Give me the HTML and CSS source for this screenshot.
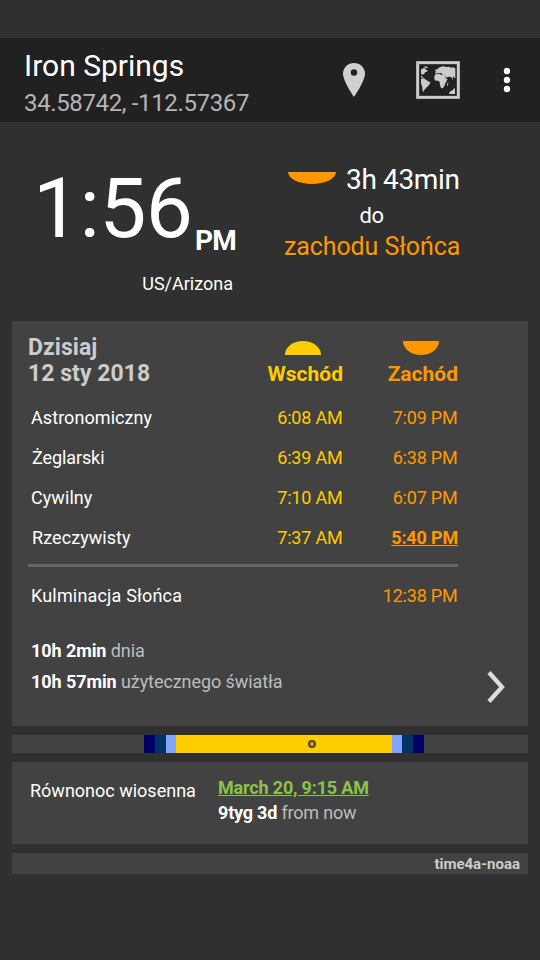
FILE: index.html
```html
<!DOCTYPE html>
<html lang="pl">
<head>
<meta charset="utf-8">
<title>Iron Springs</title>
<link rel="stylesheet" href="styles.css">
</head>
<body>
<header class="bar">
  <div class="place">
    <h1><span>Iron Springs</span></h1>
    <p><span>34.58742, -112.57367</span></p>
  </div>
  <svg class="pin" width="22" height="34" viewBox="0 0 22 34"><path fill="#d0d0d0" fill-rule="evenodd" d="M11 0C4.900 0 0 4.700 0 10.700C0 18 11 34 11 34S22 18 22 10.700C22 4.700 17.100 0 11 0ZM11 6.300a3.200 3.200 0 1 1 0 6.400a3.200 3.200 0 0 1 0-6.400Z"/></svg>
  <svg class="map" width="44" height="38" viewBox="0 0 132 114">
    <rect x="5" y="5" width="122" height="104" fill="none" stroke="#ccc" stroke-width="9"/>
    <g fill="#ccc">
      <path d="M15 25l5-1 2-4 5 2 3 4 5 2-2 4-6 2-2 5-5 2-2-3-3 3ZM24 16l9 1 4 3-5 2-7-3ZM15 43l4 4 3 2-1 3-6-4Z"/>
      <path d="M15 53l8-1 7 4 5 4 8 4-3 7-7 7-6 7-4 4v5l-3-3-1-8-1-8-3-7Z"/>
      <path d="M58 40l-1-5 5-2-5-3 2-6 3 3 4-5 7-4 11-2 5 2 10-1 6 3 6-1 7 3v30l-4-2-1-4-2 1-1 4 2 5-3-1-3-6-5-2-7 1-2 4-4-7-8-4-3-4-9-1-6 1-3 3Z"/>
      <path d="M55 45l6-6 9-1 4 3 8 0 5 3 3 9 5 1-5 9-3 6-2 7-5 6-5-1-3-9-1-9-4-4-8 0-4-5Z"/>
      <path d="M99 96l5-6 6-2 3-5 4-1v17l-11 0-7-1ZM95 64l2 1-1 9-3 0Z"/>
    </g>
  </svg>
  <svg class="dots" width="8" height="26" viewBox="0 0 8 26"><g fill="#fff"><circle cx="4" cy="4" r="3.200"/><circle cx="4" cy="13" r="3.200"/><circle cx="4" cy="22" r="3.200"/></g></svg>
</header>

<section class="now">
  <div class="clock">
    <div class="time"><span class="digits">1:56</span><span class="ampm">PM</span></div>
    <div class="zone"><span>US/Arizona</span></div>
  </div>
  <div class="next">
    <div class="remaining"><i class="sun-down wide"></i><span>3h 43min</span></div>
    <div class="until"><span>do</span></div>
    <div class="event"><span>zachodu Słońca</span></div>
  </div>
</section>

<main>
  <section class="card today">
    <div class="head">
      <h2><span class="day">Dzisiaj</span><br><span class="date">12 sty 2018</span></h2>
      <div class="col rise"><i class="sun-up"></i><b>Wschód</b></div>
      <div class="col set"><i class="sun-down"></i><b>Zachód</b></div>
    </div>
    <div class="row"><span class="n1">Astronomiczny</span><span class="rise">6:08 AM</span><span class="set">7:09 PM</span></div>
    <div class="row"><span class="n2 tight">Żeglarski</span><span class="rise">6:39 AM</span><span class="set">6:38 PM</span></div>
    <div class="row"><span class="n1">Cywilny</span><span class="rise">7:10 AM</span><span class="set">6:07 PM</span></div>
    <div class="row"><span class="n2">Rzeczywisty</span><span class="rise">7:37 AM</span><span class="set"><b class="link">5:40 PM</b></span></div>
    <div class="rule"></div>
    <div class="row"><span class="n1 wide-text">Kulminacja Słońca</span><span></span><span class="set">12:38 PM</span></div>
    <div class="lengths">
      <div><p><b>10h 2min</b> dnia</p><p><b>10h 57min</b> użytecznego światła</p></div>
      <svg class="chevron" width="18" height="32" viewBox="0 0 18 32"><path d="M2 1.500L15 16L2 30.500" fill="none" stroke="#ddd" stroke-width="4.300"/></svg>
    </div>
  </section>

  <div class="daylight">
    <i class="seg astro"></i><i class="seg naut"></i><i class="seg civil"></i><i class="seg day-seg"><i class="marker"></i></i><i class="seg civil"></i><i class="seg naut"></i><i class="seg astro"></i>
  </div>

  <section class="card season">
    <span class="name">Równonoc wiosenna</span>
    <div class="when"><p><b class="link">March 20, 9:15 AM</b></p><p class="ago"><b>9tyg 3d</b> from now</p></div>
  </section>

  <footer>time4a-noaa</footer>
</main>
</body>
</html>
```
FILE: styles.css
```css
* { box-sizing: border-box; margin: 0; padding: 0; }
body { width: 540px; height: 960px; padding-top: 38px; background: #303030; color: #fff; font-family: Roboto, "Liberation Sans", sans-serif; font-size: 18px; white-space: nowrap; overflow: hidden; }
i { display: block; }
svg { display: block; flex: none; }

.bar { display: flex; height: 84px; background: #212121; padding-left: 24px; }
.place { width: 319px; padding-top: 8px; }
.place h1 { font-size: 30px; font-weight: 400; line-height: 40px; }
.place p { margin-top: 2px; font-size: 24px; line-height: 30px; letter-spacing: -0.36px; color: #b5b5b5; }
.pin { margin-top: 25px; }
.map { margin: 23px 0 0 51px; }
.dots { margin: 29px 0 0 43px; }

.now { display: flex; height: 199px; }
.clock { width: 270px; padding: 42px 0 0 33px; }
.time { display: flex; height: 108px; }
.digits { width: 162px; font-size: 84px; line-height: 90px; letter-spacing: -0.7px; }
.ampm { padding-top: 61px; font-size: 28px; font-weight: 700; line-height: 32px; letter-spacing: -0.7px; }
.zone { width: 200px; text-align: right; line-height: 24px; }
.next { width: 204px; padding: 42px 0 0 14px; text-align: center; }
.remaining { display: flex; gap: 10px; padding-left: 4px; font-size: 28px; line-height: 32px; letter-spacing: -0.35px; }
.until { margin-top: 7px; padding-right: 15px; font-size: 22px; line-height: 26px; letter-spacing: -0.4px; }
.event { padding-right: 14px; font-size: 25px; line-height: 36px; letter-spacing: -0.1px; color: #ff9800; display: flex; }

.sun-up { width: 36px; height: 14px; background: #ffcc00; border-radius: 50% 50% 0 0 / 100% 100% 0 0; }
.sun-down { width: 36px; height: 14px; background: #ff9800; border-radius: 0 0 50% 50% / 0 0 100% 100%; }
.sun-down.wide { width: 48px; height: 12px; margin-top: 8px; }

main { display: flex; flex-direction: column; gap: 9px; padding: 0 12px; }
.card { background: #424242; }
.today { height: 405px; padding: 14px 0 0 16px; }
.head { display: grid; grid-template-columns: 239px 76px 115px; height: 62px; }
h2 { font-size: 23px; line-height: 26px; color: #ccc; letter-spacing: 0.05px; }
.col { display: flex; flex-direction: column; align-items: flex-end; padding-top: 6px; font-size: 21px; line-height: 24px; }
.col b { margin-top: 7px; }
.col .sun-up { margin-right: 22px; }
.col .sun-down { margin-right: 19px; }
.rise { color: #ffcc00; }
.set { color: #ff9800; }
.row { display: grid; grid-template-columns: 239px 76px 115px; height: 40px; line-height: 42px; }
.row .rise, .row .set { padding-right: 0.5px; text-align: right; letter-spacing: -0.2px; }
.row .set:has(.link) { padding-right: 0; }
.n1, .n2 { letter-spacing: 0.07px; }
.n1 { padding-left: 3px; }
.n1.wide-text { letter-spacing: 0.17px; }
.n2 { padding-left: 4px; }
.n2.tight { letter-spacing: -0.1px; }
.link { text-decoration: underline; letter-spacing: -0.17px; }
.rule { width: 430px; height: 3px; margin: 7px 0 8px; background: #686868; }
.lengths { display: flex; justify-content: space-between; padding: 20px 23px 0 3px; color: #bdbdbd; letter-spacing: -0.08px; }
.lengths p { height: 31px; line-height: 31px; }
.lengths b, .ago b { color: #fff; }
.chevron { margin-top: 36px; }

.daylight { display: flex; height: 18px; padding-left: 132px; background: #424242; }
.astro { width: 11px; background: #000066; }
.naut { width: 11px; background: #003366; }
.civil { width: 10px; background: #80a4ff; }
.day-seg { width: 216px; background: #ffcc00; padding: 5px 0 0 132px; }
.marker { width: 8px; height: 8px; border: 2px solid #444; border-radius: 50%; background: #ff9800; }

.season { display: flex; height: 82px; padding: 13px 0 0 18px; line-height: 25px; }
.season .name { width: 188px; padding-top: 3px; }
.when .link { color: #8bc34a; }
.ago { color: #bdbdbd; letter-spacing: -0.2px; }
footer { height: 21px; padding-right: 8px; background: #424242; color: #ccc; font-size: 15px; font-weight: 700; line-height: 22px; text-align: right; }
```
